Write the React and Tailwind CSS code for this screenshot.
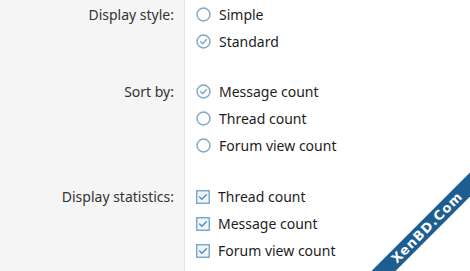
import React from "react";

const RadioIcon = ({ checked }) => (
  <svg width="15" height="15" viewBox="0 0 15 15" className="shrink-0">
    <circle cx="7.5" cy="7.5" r="6.5" fill="white" stroke="#7ea7c4" strokeWidth="1.4" />
    {checked && (
      <path d="M4.6 7.7 L6.7 9.7 L10.5 5.6" fill="none" stroke="#7ea7c4" strokeWidth="1.4" strokeLinecap="round" strokeLinejoin="round" />
    )}
  </svg>
);

const CheckIcon = () => (
  <svg width="14" height="14" viewBox="0 0 14 14" className="shrink-0">
    <rect x="0.75" y="0.75" width="12.5" height="12.5" fill="#eef5fb" stroke="#6c9fc7" strokeWidth="1.3" />
    <path d="M3.6 7.1 L5.9 9.3 L10.4 4.8" fill="none" stroke="#4f8cbf" strokeWidth="1.4" strokeLinecap="round" strokeLinejoin="round" />
  </svg>
);

const groups = [
  { label: "Display style:", type: "radio", items: [["Simple", false], ["Standard", true]] },
  { label: "Sort by:", type: "radio", items: [["Message count", true], ["Thread count", false], ["Forum view count", false]] },
  { label: "Display statistics:", type: "check", items: [["Thread count", true], ["Message count", true], ["Forum view count", true]] },
];

export default function App() {
  return (
    <div
      className="relative w-[470px] h-[271px] overflow-hidden bg-white text-[14px]"
      style={{ fontFamily: '"Segoe UI", "Noto Sans", "Open Sans", sans-serif' }}
    >
      <div className="flex flex-col">
        {groups.map((g, gi) => (
          <div key={gi} className="flex">
            <div
              className={`w-[185px] shrink-0 bg-[#f5f5f5] border-r border-[#e3e3e3] text-right pr-[10px] text-[#333] ${
                gi === 0 ? "pt-[1px] pb-[23px]" : "pb-[24px]"
              }`}
            >
              <div className="h-[27px] leading-[27px]">{g.label}</div>
            </div>
            <div className={`flex flex-col pl-[11px] ${gi === 0 ? "pt-[1px] pb-[23px]" : "pb-[24px]"}`}>
              {g.items.map(([t, c], i) => (
                <div key={i} className="flex items-center gap-[8px] h-[27px] text-[#1d1d1d]">
                  {g.type === "radio" ? <RadioIcon checked={c} /> : <CheckIcon />}
                  <span className="leading-[27px]">{t}</span>
                </div>
              ))}
            </div>
          </div>
        ))}
      </div>
      <div className="absolute left-[327px] top-[219px] w-[200px] h-[17px] bg-[#1d5d8f] -rotate-45 flex items-center justify-center">
        <span
          className="text-white font-bold text-[13px] tracking-[1px] leading-none"
          style={{ fontFamily: '"DejaVu Sans", sans-serif' }}
        >
          XenBD.Com
        </span>
      </div>
    </div>
  );
}
